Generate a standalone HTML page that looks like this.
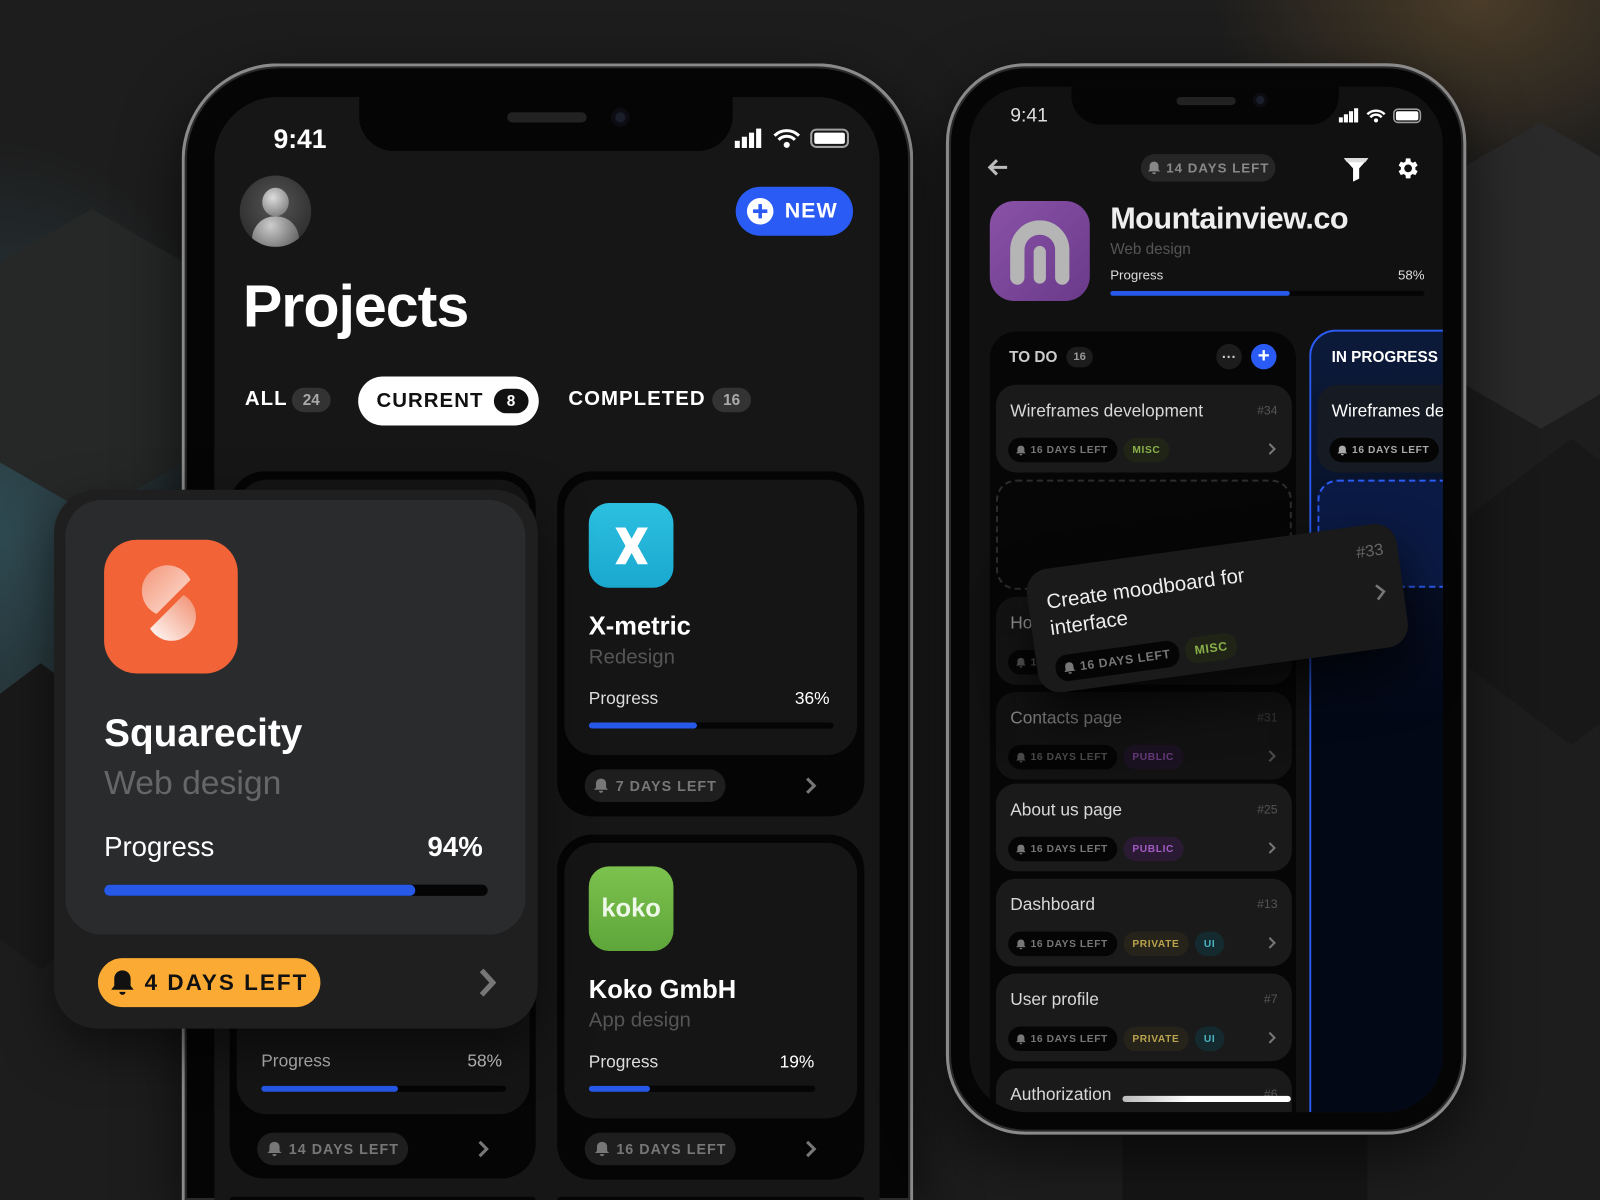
<!DOCTYPE html>
<html><head><meta charset="utf-8"><style>
*{margin:0;padding:0;box-sizing:border-box}
html,body{width:1600px;height:1200px;overflow:hidden;background:#1c1c1c;font-family:"Liberation Sans",sans-serif}
#w{position:absolute;left:0;top:0;width:1568px;height:1176px;transform:scale(1.0204);transform-origin:0 0;overflow:hidden;
background:radial-gradient(ellipse 260px 380px at 0px 520px,#2f4a52 0%,rgba(40,60,66,0) 100%),radial-gradient(ellipse 260px 180px at 1450px 0px,#4a3c28 0%,rgba(60,50,30,0) 100%),#1d1d1d}
.a{position:absolute}
.hex{position:absolute;background:#252525;clip-path:polygon(50% 0,100% 25%,100% 75%,50% 100%,0 75%,0 25%)}
.frame{position:absolute;border-radius:80px;background:#050505;border:3px solid #8a8a8a;box-shadow:0 0 0 2px #2a2a2a inset,0 20px 60px rgba(0,0,0,.6)}
.screen{position:absolute;background:#161616;overflow:hidden}
.t{position:absolute;white-space:nowrap;color:#fff}
.pill{position:absolute;border-radius:20px;display:flex;align-items:center;justify-content:center;font-weight:bold;letter-spacing:1px;white-space:nowrap}
.bar{position:absolute;height:6px;background:#050505;border-radius:3px;overflow:hidden}
.bar i{display:block;height:100%;background:#2659e8;border-radius:3px}
.tc{position:absolute;left:6px;width:290px;height:86px;background:#1a1a1a;border-radius:20px}
.tc .n{position:absolute;left:14px;top:16px;font-size:17px;color:#d8d8d8}
.tc .h{position:absolute;right:14px;top:18px;font-size:12px;color:#555}
.row{position:absolute;left:12px;top:52px;display:flex;gap:6px}
.tg{height:24px;border-radius:12px;font-size:10px;font-weight:bold;letter-spacing:.6px;display:flex;align-items:center;padding:0 9px;white-space:nowrap}
.dl{background:#050505;color:#777;padding-left:7px}
.dl svg{margin-right:4px}
.chev{position:absolute;right:14px;top:56px}
</style></head><body><div id="w">
<div class="hex" style="left:-40px;top:205px;width:260px;height:300px;background:#262828"></div>
<div class="hex" style="left:-60px;top:650px;width:200px;height:300px;background:#191919"></div>
<div class="hex" style="left:1380px;top:120px;width:260px;height:300px;background:#2a2a2a"></div>
<div class="hex" style="left:1440px;top:430px;width:200px;height:300px;background:#181818"></div>
<div class="a" style="left:1100px;top:1110px;width:240px;height:66px;background:#161616"></div>

<svg width="0" height="0" style="position:absolute"><defs><symbol id="bell" viewBox="0 0 16 16"><path d="M8 1c-3 0-5 2-5 5v4l-2 2h14l-2-2V6c0-3-2-5-5-5zM6 13a2 2 0 0 0 4 0z" fill="currentColor"/></symbol></defs></svg>

<!-- PHONE 1 -->
<div class="frame" style="left:178px;top:62px;width:717px;height:1114px;border-radius:95px 95px 0 0;border-bottom:none"></div>
<div class="screen" style="left:210px;top:95px;width:652px;height:1081px;border-radius:62px 62px 0 0">
  <div class="a" style="left:142px;top:0;width:366px;height:53px;background:#050505;border-radius:0 0 34px 34px"></div>
  <div class="a" style="left:287px;top:15px;width:78px;height:10px;background:#222;border-radius:5px"></div>
  <div class="a" style="left:389px;top:11px;width:18px;height:18px;background:#1a1d2a;border-radius:50%;box-shadow:inset 0 0 0 4px #0c0c12"></div>
  <div class="t" style="left:58px;top:26px;font-size:26px;font-weight:bold">9:41</div>
  <svg class="a" style="left:510px;top:30px" width="120" height="22"><rect x="0" y="13" width="5" height="7" fill="#fff"/><rect x="7" y="9" width="5" height="11" fill="#fff"/><rect x="14" y="5" width="5" height="15" fill="#fff"/><rect x="21" y="1" width="5" height="19" fill="#fff"/><path d="M39 8a17 17 0 0 1 24 0M43 12a11 11 0 0 1 16 0" stroke="#fff" stroke-width="3" fill="none"/><circle cx="51" cy="17" r="3" fill="#fff"/><rect x="75" y="2" width="36" height="17" rx="5" fill="none" stroke="#fff" stroke-width="2" opacity=".6"/><rect x="78" y="5" width="30" height="11" rx="2" fill="#fff"/></svg>
  <div class="a" style="left:25px;top:77px;width:70px;height:70px;border-radius:50%;background:radial-gradient(circle at 50% 40%,#555,#222);overflow:hidden"><div class="a" style="left:22px;top:12px;width:26px;height:28px;border-radius:50%;background:radial-gradient(circle at 40% 35%,#ddd,#666)"></div><div class="a" style="left:12px;top:40px;width:46px;height:30px;border-radius:23px 23px 8px 8px;background:radial-gradient(circle at 40% 30%,#ccc,#555)"></div></div>
  <div class="pill" style="left:511px;top:88px;width:115px;height:48px;border-radius:24px;background:#2a5cf5;color:#fff;font-size:21px;justify-content:flex-start;padding-left:10px"><svg width="28" height="28" style="margin-right:10px"><circle cx="14" cy="14" r="13" fill="#fff"/><path d="M14 7v14M7 14h14" stroke="#2a5cf5" stroke-width="3.5"/></svg>NEW</div>
  <div class="t" style="left:28px;top:172px;font-size:58px;font-weight:bold;letter-spacing:-1px">Projects</div>
  <div class="t" style="left:30px;top:285px;font-size:20px;font-weight:bold;letter-spacing:1px">ALL</div>
  <div class="pill" style="left:76px;top:285px;width:38px;height:24px;background:#333;color:#aaa;font-size:15px;letter-spacing:0">24</div>
  <div class="pill" style="left:141px;top:274px;width:177px;height:48px;border-radius:24px;background:#fff;color:#111;font-size:20px;justify-content:flex-start;padding-left:18px">CURRENT<span style="margin-left:10px;background:#111;color:#fff;border-radius:12px;width:34px;height:24px;display:inline-flex;align-items:center;justify-content:center;font-size:15px;letter-spacing:0">8</span></div>
  <div class="t" style="left:347px;top:285px;font-size:20px;font-weight:bold;letter-spacing:1px">COMPLETED</div>
  <div class="pill" style="left:488px;top:285px;width:38px;height:24px;background:#333;color:#aaa;font-size:15px;letter-spacing:0">16</div>

  <div class="a" style="left:15px;top:367px;width:300px;height:693px;background:#050505;border-radius:34px"></div>
  <div class="a" style="left:22px;top:375px;width:287px;height:622px;background:#151515;border-radius:30px"></div>
  <div class="t" style="left:46px;top:935px;font-size:17px;color:#bbb">Progress</div>
  <div class="t" style="left:248px;top:935px;font-size:17px;color:#ccc">58%</div>
  <div class="bar" style="left:46px;top:969px;width:240px"><i style="width:56%"></i></div>
  <div class="pill" style="left:42px;top:1015px;width:148px;height:32px;background:#1e1e1e;color:#777;font-size:14px"><svg width="16" height="16" style="margin-right:6px;color:#777"><use href="#bell"/></svg>14 DAYS LEFT</div>
  <svg class="a" style="left:258px;top:1022px" width="12" height="18"><path d="M2 2l7 7-7 7" stroke="#777" stroke-width="3" fill="none"/></svg>

  <div class="a" style="left:336px;top:367px;width:301px;height:338px;background:#050505;border-radius:34px"></div>
  <div class="a" style="left:343px;top:375px;width:287px;height:270px;background:#151515;border-radius:30px"></div>
  <div class="a" style="left:367px;top:398px;width:83px;height:83px;border-radius:20px;background:linear-gradient(#2cc0e0,#1aa8cf)"><svg width="83" height="83"><path d="M26 24h10l6 11 6-11h10l-10 18 10 18H48l-6-11-6 11H26l10-18z" fill="#fff"/></svg></div>
  <div class="t" style="left:367px;top:505px;font-size:25px;font-weight:bold">X-metric</div>
  <div class="t" style="left:367px;top:538px;font-size:20px;color:#555">Redesign</div>
  <div class="t" style="left:367px;top:580px;font-size:17px;color:#ddd">Progress</div>
  <div class="t" style="left:569px;top:580px;font-size:17px">36%</div>
  <div class="bar" style="left:367px;top:613px;width:240px"><i style="width:44%"></i></div>
  <div class="pill" style="left:363px;top:659px;width:138px;height:32px;background:#1e1e1e;color:#777;font-size:14px"><svg width="16" height="16" style="margin-right:6px;color:#777"><use href="#bell"/></svg>7 DAYS LEFT</div>
  <svg class="a" style="left:579px;top:666px" width="12" height="18"><path d="M2 2l7 7-7 7" stroke="#777" stroke-width="3" fill="none"/></svg>

  <div class="a" style="left:336px;top:723px;width:301px;height:338px;background:#050505;border-radius:34px"></div>
  <div class="a" style="left:343px;top:731px;width:287px;height:270px;background:#151515;border-radius:30px"></div>
  <div class="a" style="left:367px;top:754px;width:83px;height:83px;border-radius:20px;background:linear-gradient(#7cc24e,#5ea63a);display:flex;align-items:center;justify-content:center;color:#eef8e8;font-size:25px;font-weight:bold">koko</div>
  <div class="t" style="left:367px;top:861px;font-size:25px;font-weight:bold">Koko GmbH</div>
  <div class="t" style="left:367px;top:894px;font-size:20px;color:#555">App design</div>
  <div class="t" style="left:367px;top:936px;font-size:17px;color:#ddd">Progress</div>
  <div class="t" style="left:554px;top:936px;font-size:17px">19%</div>
  <div class="bar" style="left:367px;top:969px;width:222px"><i style="width:27%"></i></div>
  <div class="pill" style="left:363px;top:1015px;width:148px;height:32px;background:#1e1e1e;color:#777;font-size:14px"><svg width="16" height="16" style="margin-right:6px;color:#777"><use href="#bell"/></svg>16 DAYS LEFT</div>
  <svg class="a" style="left:579px;top:1022px" width="12" height="18"><path d="M2 2l7 7-7 7" stroke="#777" stroke-width="3" fill="none"/></svg>
  <div class="a" style="left:15px;top:1078px;width:300px;height:3px;background:#050505;border-radius:3px 3px 0 0"></div>
  <div class="a" style="left:336px;top:1078px;width:301px;height:3px;background:#050505;border-radius:3px 3px 0 0"></div>
</div>

<div class="a" style="left:53px;top:480px;width:474px;height:528px;background:#1f1f1f;border-radius:42px;box-shadow:0 20px 50px rgba(0,0,0,.5)"></div>
<div class="a" style="left:64px;top:490px;width:451px;height:426px;background:#2a2b2d;border-radius:36px"></div>
<div class="a" style="left:102px;top:529px;width:131px;height:131px;border-radius:32px;background:#f26437">
  <svg width="131" height="131"><defs>
    <linearGradient id="g1" x1="0" y1="0" x2="1" y2="1"><stop offset="0" stop-color="#f4967a"/><stop offset="1" stop-color="#fde6dc"/></linearGradient>
    <linearGradient id="g2" x1="1" y1="0" x2="0" y2="1"><stop offset="0" stop-color="#f08a6a"/><stop offset="1" stop-color="#fff"/></linearGradient>
    <clipPath id="c1"><polygon points="0,0 124,0 0,124"/></clipPath>
    <clipPath id="c2"><polygon points="131,1 131,131 1,131"/></clipPath></defs>
    <circle cx="62" cy="50" r="25" fill="url(#g1)" clip-path="url(#c1)"/>
    <circle cx="66" cy="75" r="24" fill="url(#g2)" clip-path="url(#c2)"/></svg>
</div>
<div class="t" style="left:102px;top:698px;font-size:38px;font-weight:bold">Squarecity</div>
<div class="t" style="left:102px;top:748px;font-size:33px;color:#666">Web design</div>
<div class="t" style="left:102px;top:815px;font-size:27px">Progress</div>
<div class="t" style="left:419px;top:815px;font-size:27px;font-weight:bold">94%</div>
<div class="bar" style="left:102px;top:867px;width:376px;height:11px;border-radius:6px"><i style="width:81%;border-radius:6px"></i></div>
<div class="pill" style="left:96px;top:939px;width:218px;height:48px;border-radius:24px;background:#fbab33;color:#111;font-size:22px;letter-spacing:2px"><svg width="24" height="26" style="margin-right:10px"><path d="M12 1c-5 0-8 4-8 8v7l-3 4h22l-3-4V9c0-4-3-8-8-8zM9 22a3 3 0 0 0 6 0z" fill="#111"/></svg>4 DAYS LEFT</div>
<svg class="a" style="left:469px;top:948px" width="18" height="30"><path d="M3 3l11 12-11 12" stroke="#777" stroke-width="5" fill="none"/></svg>

<!-- PHONE 2 -->
<div class="frame" style="left:927px;top:62px;width:510px;height:1050px;border-radius:78px"></div>
<div class="screen" style="left:950px;top:85px;width:464px;height:1005px;border-radius:56px;background:#111">
  <div class="a" style="left:100px;top:0;width:262px;height:37px;background:#050505;border-radius:0 0 28px 28px"></div>
  <div class="a" style="left:203px;top:10px;width:58px;height:8px;background:#222;border-radius:4px"></div>
  <div class="a" style="left:278px;top:6px;width:14px;height:14px;background:#1a1d2a;border-radius:50%;box-shadow:inset 0 0 0 3px #0c0c12"></div>
  <div class="t" style="left:40px;top:18px;font-size:19px;color:#ddd">9:41</div>
  <svg class="a" style="left:362px;top:21px" width="82" height="16"><rect x="0" y="9" width="4" height="5" fill="#fff"/><rect x="5" y="6" width="4" height="8" fill="#fff"/><rect x="10" y="3" width="4" height="11" fill="#fff"/><rect x="15" y="0" width="4" height="14" fill="#fff"/><path d="M28 6a12 12 0 0 1 17 0M31 9a7 7 0 0 1 11 0" stroke="#fff" stroke-width="2.4" fill="none"/><circle cx="36.5" cy="12" r="2" fill="#fff"/><rect x="54" y="1" width="26" height="13" rx="4" fill="none" stroke="#fff" stroke-width="1.5" opacity=".6"/><rect x="56" y="3" width="22" height="9" rx="2" fill="#fff"/></svg>
  <svg class="a" style="left:17px;top:70px" width="22" height="18"><path d="M20 9H4M10 2L3 9l7 7" stroke="#bbb" stroke-width="3" fill="none"/></svg>
  <div class="pill" style="left:168px;top:66px;width:132px;height:27px;background:#262626;color:#888;font-size:13px"><svg width="14" height="15" style="margin-right:5px;color:#888"><use href="#bell"/></svg>14 DAYS LEFT</div>
  <svg class="a" style="left:366px;top:68px" width="26" height="26"><path d="M1 2h24l-9 10v10l-6 3V12z" fill="#fff"/><path d="M1 2h24l-3 4H4z" fill="#ddd"/></svg>
  <svg class="a" style="left:416px;top:67px" width="26" height="26" viewBox="0 0 24 24"><path fill="#fff" d="M19.4 13a7.5 7.5 0 0 0 0-2l2.1-1.6-2-3.5-2.5 1a7.6 7.6 0 0 0-1.7-1L14.9 3h-4l-.4 2.9a7.6 7.6 0 0 0-1.7 1l-2.5-1-2 3.5L6.4 11a7.5 7.5 0 0 0 0 2l-2.1 1.6 2 3.5 2.5-1a7.6 7.6 0 0 0 1.7 1l.4 2.9h4l.4-2.9a7.6 7.6 0 0 0 1.7-1l2.5 1 2-3.5zM12.9 15.5a3.5 3.5 0 1 1 0-7 3.5 3.5 0 0 1 0 7z"/></svg>
  <div class="a" style="left:20px;top:112px;width:98px;height:98px;border-radius:24px;background:linear-gradient(135deg,#8a52a8,#6a3a8a)"><svg width="98" height="98"><path d="M27 75V48a22 22 0 0 1 44 0v27" stroke="#b5b5b5" stroke-width="14" fill="none" stroke-linecap="round"/><path d="M49 75V50" stroke="#b5b5b5" stroke-width="12" stroke-linecap="round"/></svg></div>
  <div class="t" style="left:138px;top:113px;font-size:30px;font-weight:bold;letter-spacing:-.5px;color:#eee">Mountainview.co</div>
  <div class="t" style="left:138px;top:151px;font-size:15px;color:#555">Web design</div>
  <div class="t" style="left:138px;top:177px;font-size:13px;color:#ddd">Progress</div>
  <div class="t" style="left:420px;top:177px;font-size:13px;color:#ddd">58%</div>
  <div class="bar" style="left:138px;top:200px;width:308px;height:5px"><i style="width:57%"></i></div>

  <div class="a" style="left:20px;top:240px;width:300px;height:765px;background:#060606;border-radius:26px 26px 0 0">
    <div class="t" style="left:19px;top:17px;font-size:15px;font-weight:bold;color:#ccc">TO DO</div>
    <div class="pill" style="left:75px;top:15px;width:26px;height:20px;background:#1c1c1c;color:#999;font-size:11px;letter-spacing:0">16</div>
    <div class="pill" style="left:222px;top:12px;width:25px;height:25px;background:#1c1c1c;color:#ccc;font-size:14px;letter-spacing:0">···</div>
    <div class="pill" style="left:256px;top:12px;width:25px;height:25px;background:#2a5cf5;color:#fff;font-size:20px;letter-spacing:0">+</div>
  </div>
  <div class="a" style="left:20px;top:240px;width:300px;height:765px;overflow:hidden">
    <div class="tc" style="top:52px"><div class="n">Wireframes development</div><div class="h">#34</div><div class="row"><div class="tg dl"><svg width="11" height="11"><use href="#bell"/></svg>16 DAYS LEFT</div><div class="tg" style="background:#1f2417;color:#8ab04a">MISC</div></div><svg class="chev" width="10" height="14"><path d="M2 2l5 5-5 5" stroke="#777" stroke-width="2" fill="none"/></svg></div>
    <div class="a" style="left:6px;top:145px;width:290px;height:108px;border:2px dashed #2c2c2c;border-radius:20px"></div>
    <div class="tc" style="top:260px;opacity:.7"><div class="n">Homepage</div><div class="h">#32</div><div class="row"><div class="tg dl"><svg width="11" height="11"><use href="#bell"/></svg>16 DAYS LEFT</div></div></div>
    <div class="tc" style="top:353px;opacity:.6"><div class="n">Contacts page</div><div class="h">#31</div><div class="row"><div class="tg dl"><svg width="11" height="11"><use href="#bell"/></svg>16 DAYS LEFT</div><div class="tg" style="background:#2a1a33;color:#a35bc4">PUBLIC</div></div><svg class="chev" width="10" height="14"><path d="M2 2l5 5-5 5" stroke="#777" stroke-width="2" fill="none"/></svg></div>
    <div class="tc" style="top:443px"><div class="n">About us page</div><div class="h">#25</div><div class="row"><div class="tg dl"><svg width="11" height="11"><use href="#bell"/></svg>16 DAYS LEFT</div><div class="tg" style="background:#2a1a33;color:#a35bc4">PUBLIC</div></div><svg class="chev" width="10" height="14"><path d="M2 2l5 5-5 5" stroke="#777" stroke-width="2" fill="none"/></svg></div>
    <div class="tc" style="top:536px"><div class="n">Dashboard</div><div class="h">#13</div><div class="row"><div class="tg dl"><svg width="11" height="11"><use href="#bell"/></svg>16 DAYS LEFT</div><div class="tg" style="background:#26241a;color:#b9a34e">PRIVATE</div><div class="tg" style="background:#142a2e;color:#4bb5c4">UI</div></div><svg class="chev" width="10" height="14"><path d="M2 2l5 5-5 5" stroke="#777" stroke-width="2" fill="none"/></svg></div>
    <div class="tc" style="top:629px"><div class="n">User profile</div><div class="h">#7</div><div class="row"><div class="tg dl"><svg width="11" height="11"><use href="#bell"/></svg>16 DAYS LEFT</div><div class="tg" style="background:#26241a;color:#b9a34e">PRIVATE</div><div class="tg" style="background:#142a2e;color:#4bb5c4">UI</div></div><svg class="chev" width="10" height="14"><path d="M2 2l5 5-5 5" stroke="#777" stroke-width="2" fill="none"/></svg></div>
    <div class="tc" style="top:722px"><div class="n">Authorization</div><div class="h">#6</div></div>
  </div>
  <div class="a" style="left:150px;top:989px;width:165px;height:6px;background:linear-gradient(90deg,#bbb,#fff 40%);border-radius:3px"></div>

  <div class="a" style="left:333px;top:238px;width:160px;height:767px;border:2px solid #2a5cf5;border-bottom:none;border-radius:26px 26px 0 0;background:linear-gradient(#0c1a3a,#030817 50%);overflow:hidden">
    <div class="t" style="left:20px;top:17px;font-size:15px;font-weight:bold">IN PROGRESS</div>
    <div class="a" style="left:6px;top:52px;width:160px;height:86px;background:#161a22;border-radius:20px"><div class="t" style="left:14px;top:16px;font-size:17px">Wireframes development</div><div class="row"><div class="tg dl" style="color:#aaa"><svg width="11" height="11"><use href="#bell"/></svg>16 DAYS LEFT</div></div></div>
    <div class="a" style="left:6px;top:145px;width:160px;height:106px;border:2px dashed #2a5cf5;border-radius:20px;background:#0b1a44"></div>
  </div>
</div>

<div class="a" style="left:1010px;top:535px;width:366px;height:122px;background:#1a1a1a;border-radius:22px;transform:rotate(-7.8deg);box-shadow:0 25px 50px rgba(0,0,0,.7)">
  <div class="t" style="left:18px;top:20px;font-size:20px;line-height:26px;color:#eee">Create moodboard for<br>interface</div>
  <div class="t" style="right:14px;top:18px;font-size:16px;color:#666">#33</div>
  <div class="row" style="left:18px;top:86px"><div class="tg dl" style="height:26px;font-size:12px"><svg width="13" height="13"><use href="#bell"/></svg>16 DAYS LEFT</div><div class="tg" style="height:26px;font-size:12px;background:#1f2417;color:#8ab04a">MISC</div></div>
  <svg class="a" style="right:16px;top:58px" width="12" height="18"><path d="M2 2l7 7-7 7" stroke="#777" stroke-width="2.5" fill="none"/></svg>
</div>
</div></body></html>
